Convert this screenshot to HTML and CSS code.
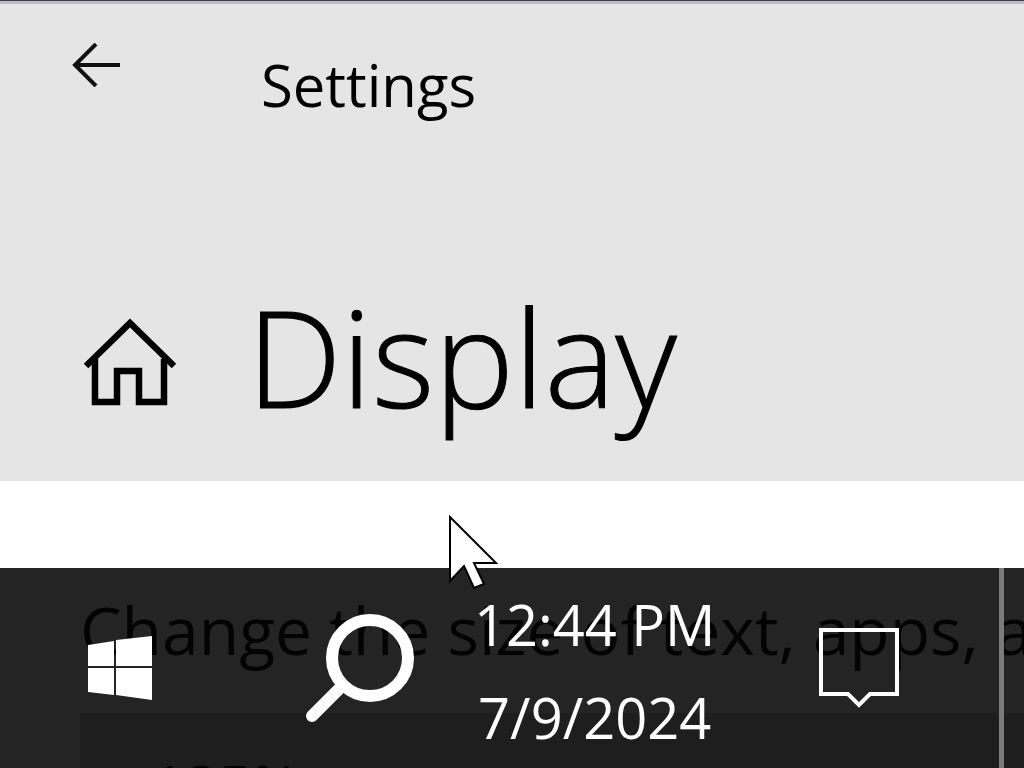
FILE: index.html
```
<!DOCTYPE html>
<html lang="en">
<head>
    <meta charset="UTF-8">
    <meta name="viewport" content="width=device-width, initial-scale=1.0">
    <title>Settings</title>
    <link rel="stylesheet" href="styles.css">
</head>
<body>

<header class="header">
    <div class="title-bar">
        <button type="button" class="back" aria-label="Back">
            <svg width="48" height="44" viewBox="0 0 48 44" fill="none" stroke="#111" stroke-width="4">
                <path d="M48 22H3M24 1L3 22L24 43"/>
            </svg>
        </button>
        <span class="app-name">Settings</span>
    </div>
    <div class="page-title">
        <a href="#" class="home" aria-label="Home">
            <svg width="92" height="88" viewBox="0 0 92 88" fill="none" stroke="#000" stroke-width="6.5">
                <path d="M2 48L46 5L90 48"/>
                <path d="M11 41V84H33V53H55V84H80V41"/>
            </svg>
        </a>
        <h1>Display</h1>
    </div>
</header>

<main class="content">
    <label for="scale">Change the size of text, apps, and other items</label>
    <select id="scale" class="scale">
        <option>125%</option>
    </select>
</main>

<!-- Taskbar sits over the page and lets it show through -->
<footer class="taskbar">
    <button type="button" class="start" aria-label="Start">
        <svg width="64" height="66" viewBox="0 0 64 66" fill="#fff">
            <path d="M0 10L26 6V31H0zM28 5L64 1V31H28zM0 33H26V60L0 57zM28 33H64V65L28 60z"/>
        </svg>
    </button>
    <button type="button" class="search" aria-label="Search">
        <svg width="108" height="108" viewBox="0 0 108 108" fill="none" stroke="#fff" stroke-width="12">
            <circle cx="64" cy="44" r="38"/>
            <path d="M36 72L6 102" stroke-linecap="round"/>
        </svg>
    </button>
    <div class="clock">
        <time>12:44 PM</time>
        <time>7/9/2024</time>
    </div>
    <button type="button" class="notifications" aria-label="Notifications">
        <svg width="80" height="80" viewBox="0 0 80 80" fill="none" stroke="#fff" stroke-width="4">
            <path d="M2 2H78V66H51L40 77L29 66H2z"/>
        </svg>
    </button>
    <button type="button" class="show-desktop" aria-label="Show desktop"></button>
</footer>

<svg class="cursor" width="52" height="76" viewBox="0 0 52 76">
    <path d="M2 2V66L16 51L26 73L36 69L26 48H48z" fill="#fff" stroke="#000" stroke-width="2"/>
</svg>

</body>
</html>
```
FILE: styles.css
```
body {
    font-family: "Open Sans", sans-serif;
    font-size: 58px;
    margin: 0;
    height: 100vh;
    overflow: hidden;
    background: #fff;
    color: #000;
}

button {
    display: block;
    padding: 0;
    border: none;
    background: none;
    cursor: pointer;
}

svg {
    display: block;
}

.header {
    background: #e5e5e5;
    border-top: 1px solid #3c3c48;
    box-shadow: inset 0 3px #bdbdca;
    padding: 42px 72px 19px;
}

.title-bar {
    display: flex;
    align-items: flex-start;
    gap: 141px;
}

.app-name {
    line-height: 84px;
}

.page-title {
    display: flex;
    align-items: center;
    gap: 71px;
    margin-top: 135px;
    padding-left: 12px;
}

h1 {
    margin: 0;
    padding-bottom: 12px;
    font-size: 134px;
    font-weight: 300;
    line-height: 188px;
    -webkit-text-stroke: 1px #000;
}

.content {
    padding: 108px 0 0 80px;
    white-space: nowrap;
}

.content label {
    display: block;
    font-size: 66px;
    line-height: 80px;
}

.scale {
    appearance: none;
    display: block;
    width: 100%;
    height: 144px;
    margin-top: 44px;
    padding: 0 72px;
    border: none;
    border-radius: 0;
    background: #ccc;
    color: #000;
    font: inherit;
}

.taskbar {
    position: fixed;
    left: 0;
    right: 0;
    bottom: 0;
    height: 200px;
    display: flex;
    align-items: center;
    background: rgba(4, 4, 4, 0.87);
    color: #fff;
}

.start {
    margin-left: 88px;
}

.search {
    margin-left: 154px;
}

.clock {
    margin-left: 60px;
    padding-top: 6px;
    font-size: 56px;
    text-align: center;
}

.clock time {
    display: block;
    line-height: 93px;
}

.notifications {
    margin-left: 104px;
}

.show-desktop {
    align-self: stretch;
    width: 25px;
    margin-left: auto;
    border-left: 5px solid #7b7b7b;
}

.cursor {
    position: fixed;
    left: 448px;
    top: 515px;
}
```
